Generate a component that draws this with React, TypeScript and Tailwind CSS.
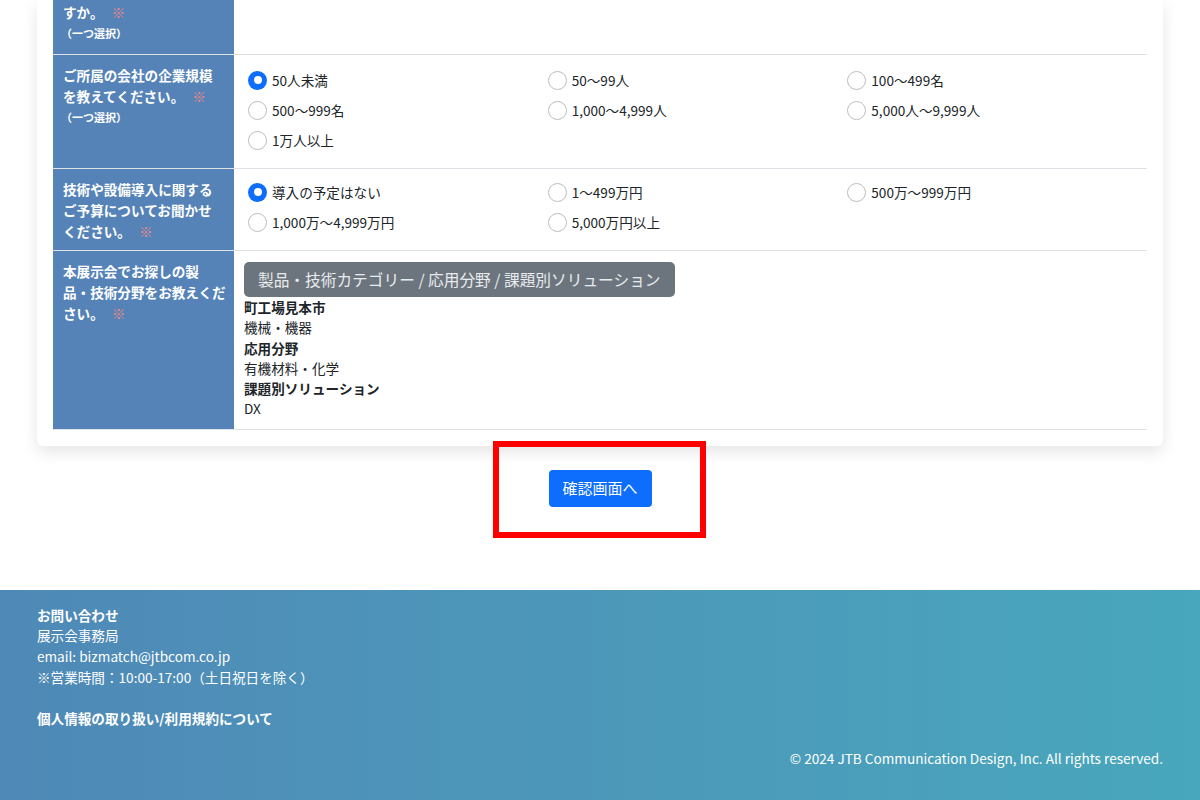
import React from "react";

const Radio = ({ label, checked = false }: { label: string; checked?: boolean }) => (
  <div className="flex items-center h-[30px] gap-[5px]">
    {checked ? (
      <span className="w-[19px] h-[19px] rounded-full bg-[#0d6efd] flex items-center justify-center shrink-0">
        <span className="w-[8px] h-[8px] rounded-full bg-white" />
      </span>
    ) : (
      <span className="w-[19px] h-[19px] rounded-full border-[1.5px] border-[#bdbdbd] bg-white shrink-0" />
    )}
    <span className="text-[#212529]">{label}</span>
  </div>
);

const Mark = () => <span className="text-[#ef8880] ml-[8px]">※</span>;

const Label = ({ children }: { children: React.ReactNode }) => (
  <div className="w-[181px] shrink-0 bg-[#5583b8] text-white font-bold pl-[10px] pt-[10px] leading-[21px] whitespace-nowrap">
    {children}
  </div>
);

const Note = () => <div className="text-[11px] leading-[21px] -ml-[2px]">（一つ選択）</div>;

export default function App() {
  return (
    <div
      className="bg-white text-[13.6px] text-[#212529] min-h-[800px]"
      style={{ fontFamily: '"Noto Sans CJK JP", "Noto Sans", sans-serif' }}
    >
      <div className="w-[1126px] mx-auto bg-white rounded-b-[6px] shadow-[0_6px_16px_rgba(0,0,0,0.10)] px-[16px] pb-[16px]">
        {/* row 0 (cut) */}
        <div className="flex border-b border-[#dee2e6] h-[55px]">
          <div className="w-[181px] shrink-0 bg-[#5583b8] text-white font-bold px-[10px] pt-[2px] leading-[21px]">
            <div>
              すか。
              <Mark />
            </div>
            <Note />
          </div>
          <div className="flex-1" />
        </div>

        {/* row 1 */}
        <div className="flex border-b border-[#dee2e6]">
          <Label>
            <div>ご所属の会社の企業規模</div>
            <div>
              を教えてください。
              <Mark />
            </div>
            <Note />
          </Label>
          <div className="flex-1 grid grid-cols-3 pl-[14px] pt-[10px] pb-[13px]">
            <Radio label="50人未満" checked />
            <Radio label="50〜99人" />
            <Radio label="100〜499名" />
            <Radio label="500〜999名" />
            <Radio label="1,000〜4,999人" />
            <Radio label="5,000人〜9,999人" />
            <Radio label="1万人以上" />
          </div>
        </div>

        {/* row 2 */}
        <div className="flex border-b border-[#dee2e6]">
          <Label>
            <div>技術や設備導入に関する</div>
            <div>ご予算についてお聞かせ</div>
            <div>
              ください。
              <Mark />
            </div>
          </Label>
          <div className="flex-1 grid grid-cols-3 pl-[14px] pt-[8px] pb-[13px]">
            <Radio label="導入の予定はない" checked />
            <Radio label="1〜499万円" />
            <Radio label="500万〜999万円" />
            <Radio label="1,000万〜4,999万円" />
            <Radio label="5,000万円以上" />
          </div>
        </div>

        {/* row 3 */}
        <div className="flex border-b border-[#dee2e6]">
          <Label>
            <div>本展示会でお探しの製</div>
            <div>品・技術分野をお教えくだ</div>
            <div>
              さい。
              <Mark />
            </div>
          </Label>
          <div className="flex-1 pl-[10px] pt-[11px] pb-[10px] leading-[20.3px]">
            <div className="inline-block rounded-[5px] bg-[#6c757d] text-[#e9ecef] text-[15.7px] h-[35px] leading-[35px] px-[14px]">
              製品・技術カテゴリー / 応用分野 / 課題別ソリューション
            </div>
            <div className="font-bold">町工場見本市</div>
            <div>機械・機器</div>
            <div className="font-bold">応用分野</div>
            <div>有機材料・化学</div>
            <div className="font-bold">課題別ソリューション</div>
            <div>DX</div>
          </div>
        </div>
      </div>

      {/* submit */}
      <div className="relative h-[144px] flex justify-center pt-[24px]">
        <button className="w-[103px] h-[37px] rounded-[4px] bg-[#0d6efd] text-white text-[15px]">
          確認画面へ
        </button>
        <div className="absolute left-[493px] top-[-5px] w-[213px] h-[97px] border-[6px] border-[#ff0000]" />
      </div>

      {/* footer */}
      <footer className="bg-gradient-to-r from-[#4f89b7] to-[#48a7bc] text-white h-[210px]">
        <div className="w-[1126px] mx-auto pt-[15px] leading-[20.6px]">
          <div className="font-bold">お問い合わせ</div>
          <div>展示会事務局</div>
          <div>email: bizmatch@jtbcom.co.jp</div>
          <div>※営業時間：10:00-17:00（土日祝日を除く）</div>
          <div className="font-bold mt-[20.6px]">個人情報の取り扱い/利用規約について</div>
          <div className="text-right mt-[20px]">© 2024 JTB Communication Design, Inc. All rights reserved.</div>
        </div>
      </footer>
    </div>
  );
}
